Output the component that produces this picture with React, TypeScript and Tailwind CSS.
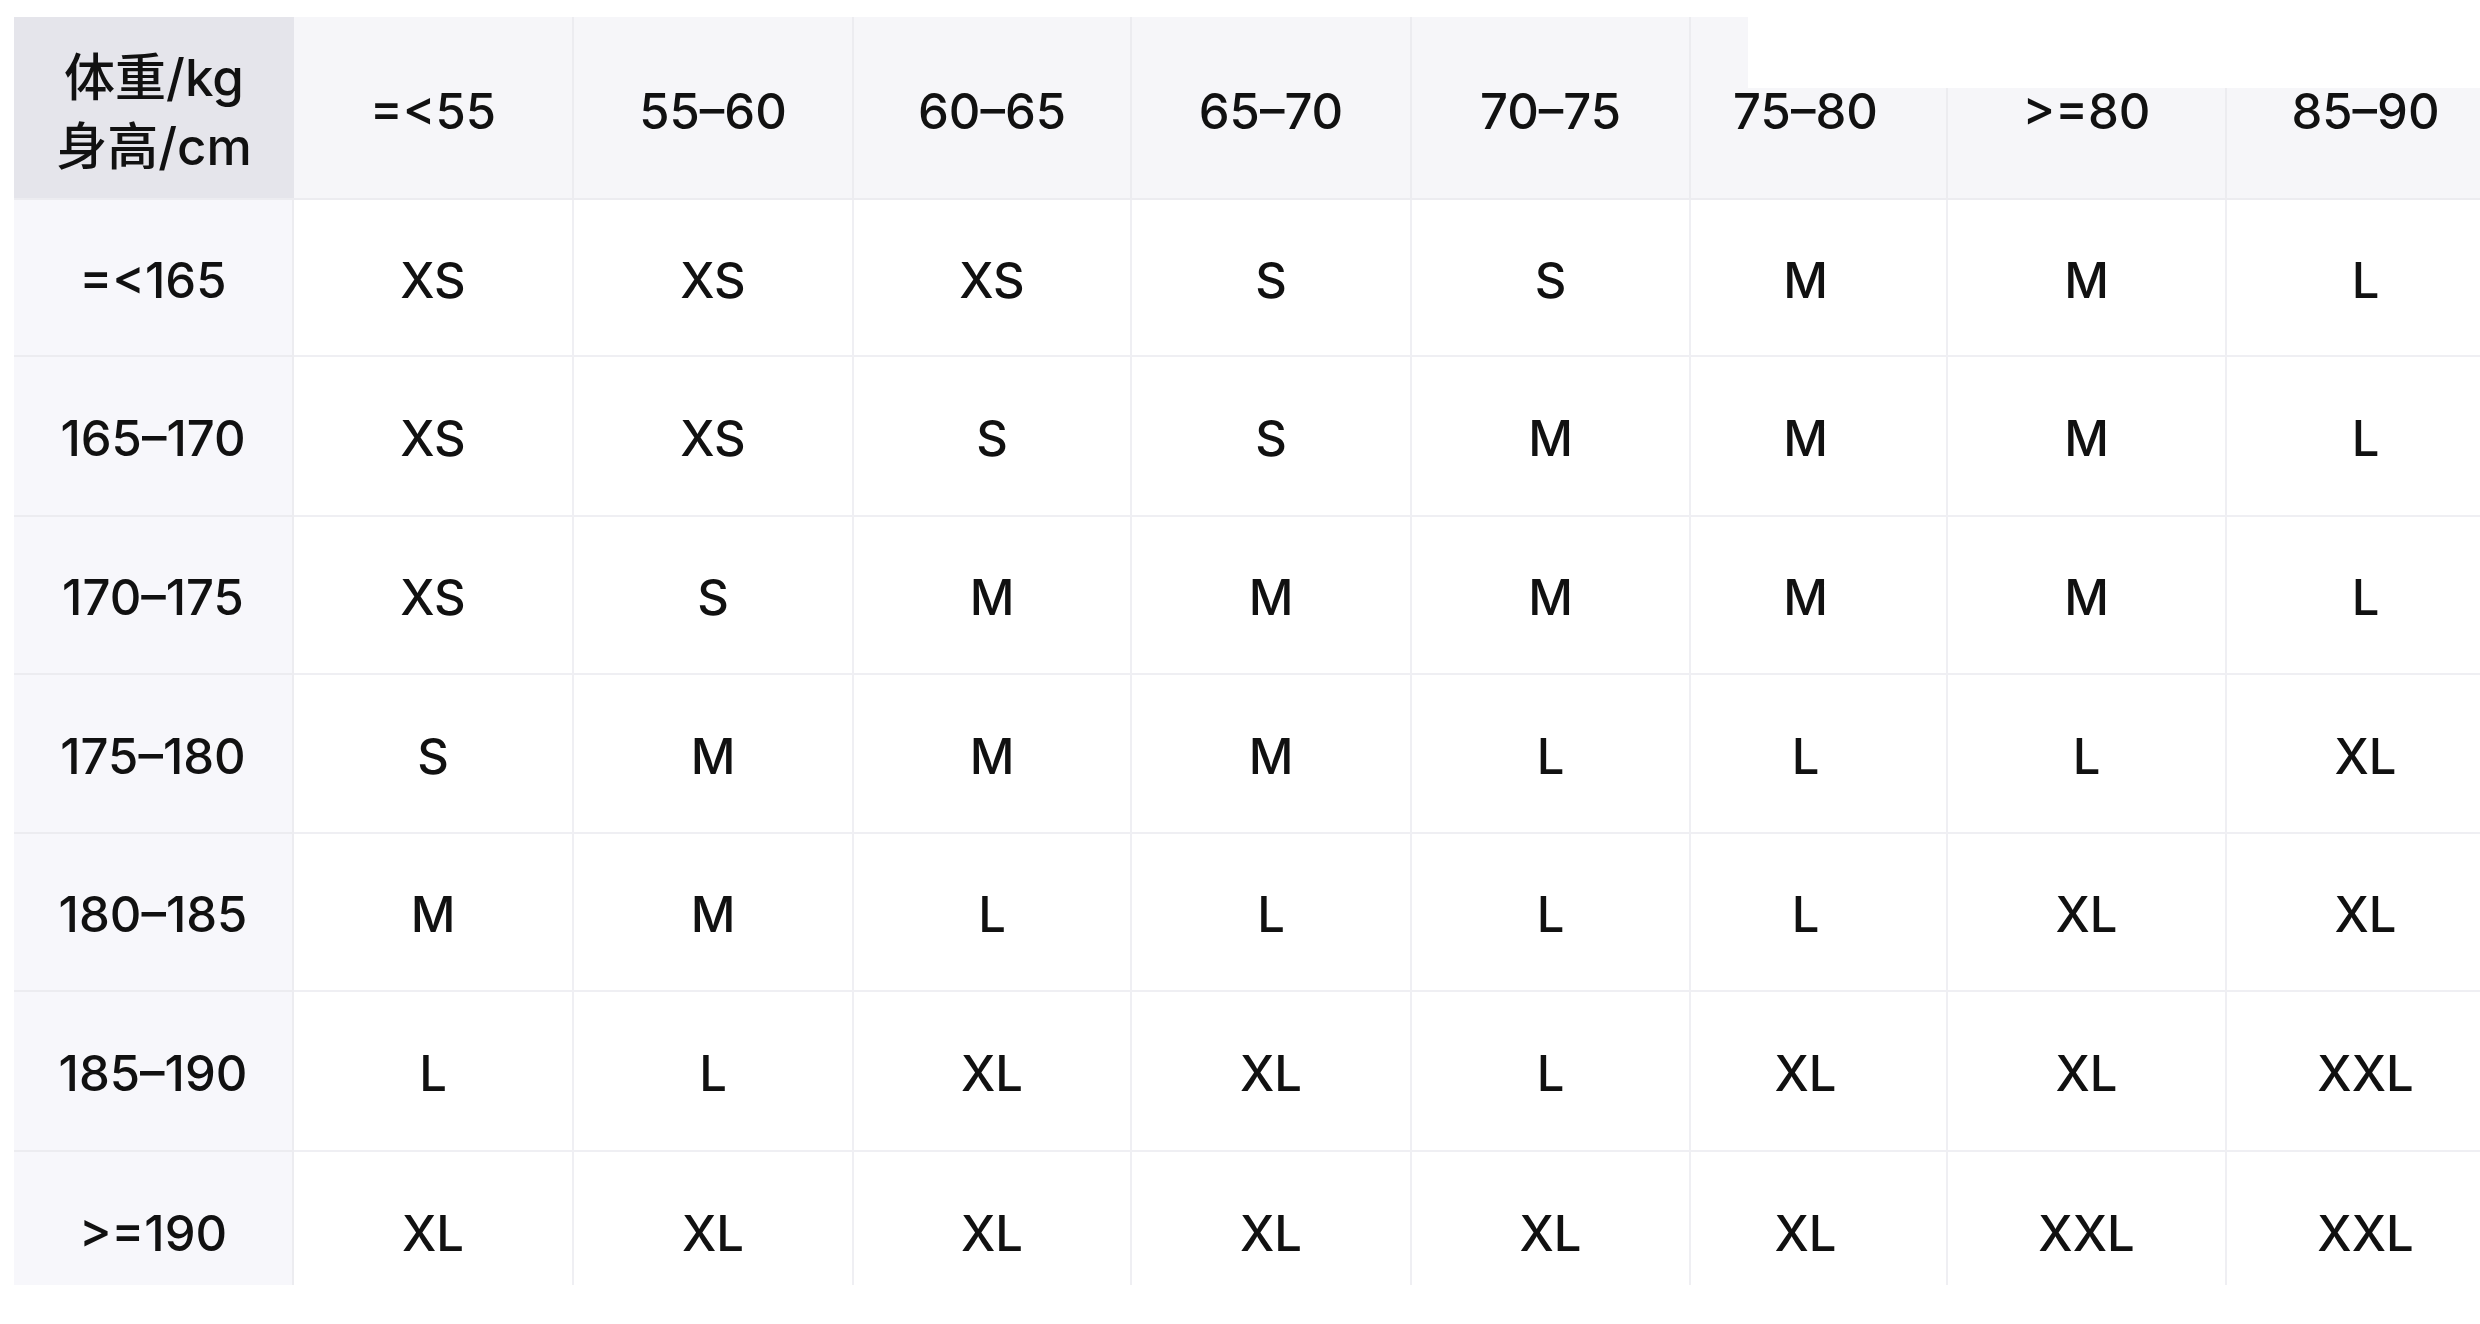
import React from 'react';

const weights = ['=<55', '55–60', '60–65', '65–70', '70–75', '75–80', '>=80', '85–90'];

const rows: { height: string; sizes: string[] }[] = [
  { height: '=<165', sizes: ['XS', 'XS', 'XS', 'S', 'S', 'M', 'M', 'L'] },
  { height: '165–170', sizes: ['XS', 'XS', 'S', 'S', 'M', 'M', 'M', 'L'] },
  { height: '170–175', sizes: ['XS', 'S', 'M', 'M', 'M', 'M', 'M', 'L'] },
  { height: '175–180', sizes: ['S', 'M', 'M', 'M', 'L', 'L', 'L', 'XL'] },
  { height: '180–185', sizes: ['M', 'M', 'L', 'L', 'L', 'L', 'XL', 'XL'] },
  { height: '185–190', sizes: ['L', 'L', 'XL', 'XL', 'L', 'XL', 'XL', 'XXL'] },
  { height: '>=190', sizes: ['XL', 'XL', 'XL', 'XL', 'XL', 'XL', 'XXL', 'XXL'] },
];

const SizeChart: React.FC = () => {
  return (
    <div
      className="w-screen h-screen overflow-hidden bg-white text-[#111] text-[49px] leading-[48px] font-medium"
      style={{ fontFamily: 'Inter, "Noto Sans CJK SC", sans-serif' }}
    >
      <div className="pl-[14px] pt-[17px]">
        <div className="grid w-max grid-cols-[280px_280px_280px_278px_280px_279px_257px_279px_279px] grid-rows-[183px_157px_160px_158px_159px_158px_160px_133px]">
          {/* Header row */}
          <div className="flex flex-col items-center justify-center pt-2 bg-[#e5e5eb] border-b-2 border-[#ececf0] text-[51px] leading-[69px]">
            <span>体重/kg</span>
            <span>身高/cm</span>
          </div>
          {weights.slice(0, 5).map((w) => (
            <div
              key={w}
              className="flex items-center justify-center pt-2 bg-[#f6f6f9] border-r-2 border-b-2 border-[#ececf0]"
            >
              {w}
            </div>
          ))}

          {/* 75–80: header strip is partly cut off at the top */}
          <div className="flex flex-col">
            <div className="flex h-[72px]">
              <div className="w-[57px] bg-[#f6f6f9]"></div>
              <div className="flex-1 bg-white"></div>
            </div>
            <div className="flex-1 flex items-center justify-center pb-[62px] pr-[26px] bg-[#f6f6f9] border-r-2 border-b-2 border-[#ececf0]">
              {weights[5]}
            </div>
          </div>
          {weights.slice(6).map((w) => (
            <div key={w} className="flex flex-col">
              <div className="h-[72px] bg-white"></div>
              <div className="flex-1 flex items-center justify-center pb-[62px] bg-[#f6f6f9] border-r-2 border-b-2 border-[#ececf0]">
                {w}
              </div>
            </div>
          ))}

          {/* Body rows; the last one is cut off at the bottom */}
          {rows.map((row, r) => {
            const last = r === rows.length - 1;
            return (
              <React.Fragment key={row.height}>
                <div
                  className={`flex justify-center bg-[#f7f7fb] border-r-2 border-[#ececf0] ${last ? 'items-start pt-[58px]' : 'items-center pt-[6px] border-b-2'}`}
                >
                  {row.height}
                </div>
                {row.sizes.map((s, c) => (
                  <div
                    key={c}
                    className={`flex justify-center bg-white border-r-2 border-[#efeff3] ${last ? 'items-start pt-[58px]' : 'items-center pt-[6px] border-b-2'} ${c === 5 ? 'pr-[26px]' : ''}`}
                  >
                    {s}
                  </div>
                ))}
              </React.Fragment>
            );
          })}
        </div>
      </div>
    </div>
  );
};

export default function App() {
  return <SizeChart />;
}
